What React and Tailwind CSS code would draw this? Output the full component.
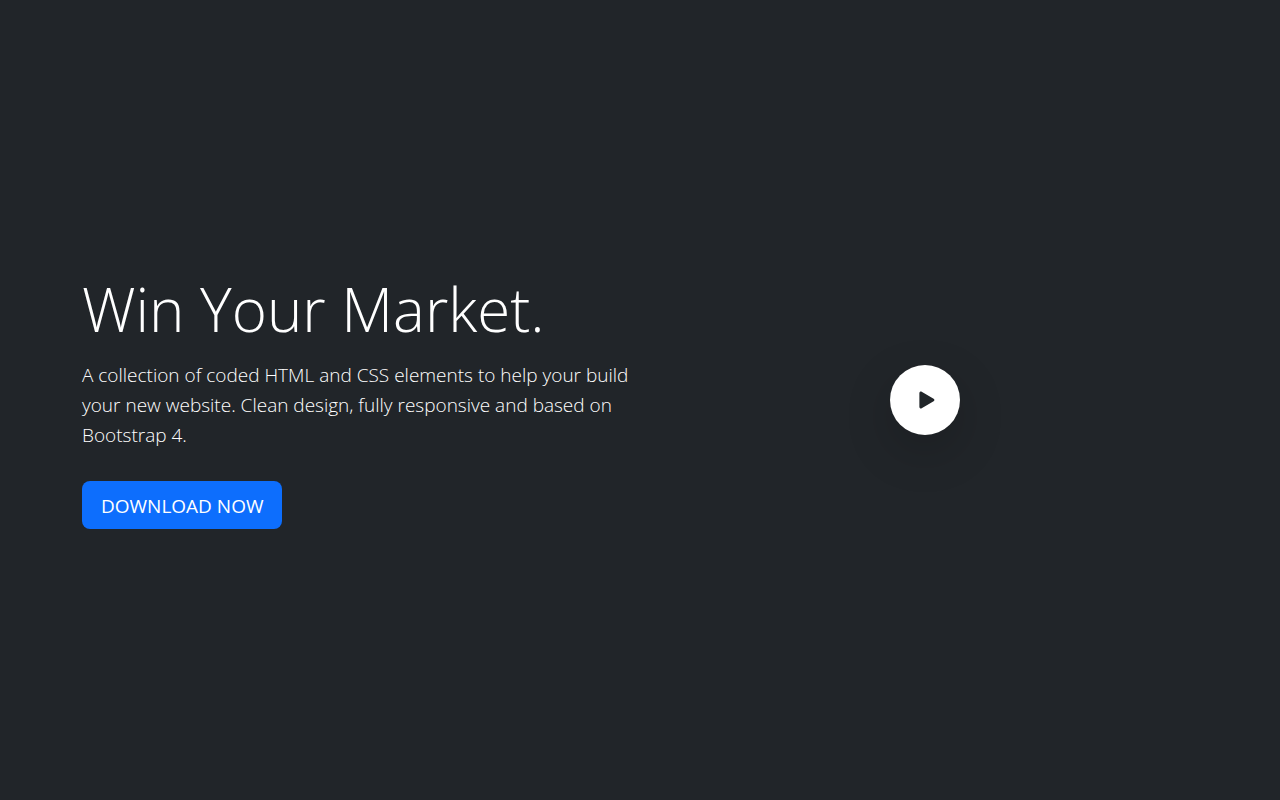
import React from "react";

export default function App() {
  return (
    <main className="flex min-h-screen items-center bg-[#212529] font-['Open_Sans','Noto_Sans',sans-serif] text-white">
      <div className="mx-auto grid w-full max-w-[1140px] grid-cols-1 items-center px-3 md:grid-cols-2">
        <section className="flex flex-col items-start">
          <h1 className="mb-[13px] text-[60px] leading-[76px] font-light">Win Your Market.</h1>
          <p className="mb-[31px] text-[19px] leading-[30px] font-light">
            A collection of coded HTML and CSS elements to help your build your new website. Clean design, fully responsive and based on Bootstrap 4.
          </p>
          <a href="#download" className="rounded-lg bg-[#0d6efd] px-[19px] pt-2.5 pb-2 text-[19px] leading-[30px] text-white">
            DOWNLOAD NOW
          </a>
        </section>
        <div className="flex justify-center pl-3">
          <button type="button" aria-label="Play video" className="flex size-[70px] items-center justify-center rounded-full bg-white text-[#212529] shadow-[0_16px_48px_rgba(0,0,0,0.175)]">
            <svg viewBox="-1 0 16 16" className="size-[30px]" fill="currentColor" aria-hidden="true">
              <path d="m11.596 8.697-6.363 3.692c-.54.313-1.233-.066-1.233-.697V4.308c0-.63.692-1.01 1.233-.696l6.363 3.692a.802.802 0 0 1 0 1.393" />
            </svg>
          </button>
        </div>
      </div>
    </main>
  );
}
